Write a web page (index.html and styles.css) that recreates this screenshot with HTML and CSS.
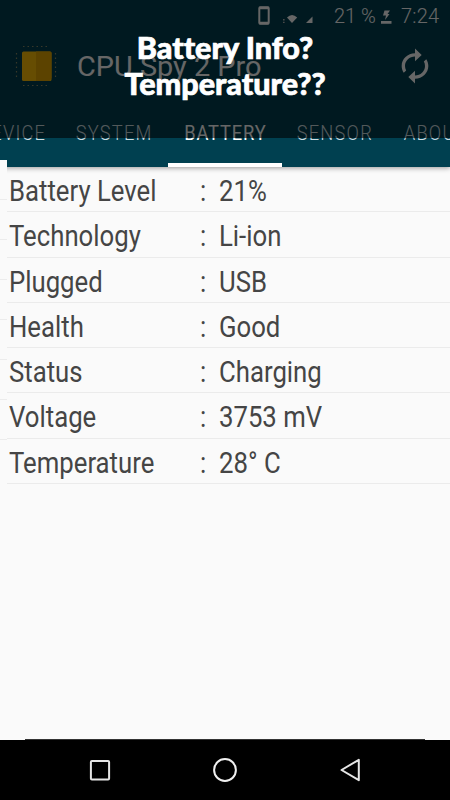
FILE: index.html
```
<!DOCTYPE html>
<html lang="en">
<head>
    <meta charset="UTF-8">
    <meta name="viewport" content="width=device-width, initial-scale=1.0">
    <title>CPU Spy 2 Pro</title>
    <link rel="stylesheet" href="styles.css">
</head>
<body>
    <div class="phone">
        <header class="header">
            <div class="status-bar">
                <svg class="status-icons" width="64" height="32" viewBox="0 0 64 32">
                    <rect x="9.3" y="7.3" width="9.4" height="16.4" rx="1" fill="none" stroke="#fff" stroke-width="2"/>
                    <path d="M9 8h10M9 23h10" stroke="#fff" stroke-width="2.6"/>
                    <path d="M33 19h1.6v1.6H33zM33 21.7h1.6v1.4H33z" fill="#bbb"/>
                    <path d="M37 17.5Q42 12.500 47.2 17.5L42 23z" fill="#fff"/>
                    <path d="M62.500 16.500v6.500h-6.500z" fill="#fff"/>
                </svg>
                <span class="percent">21 %</span>
                <svg class="charge" width="12" height="32" viewBox="0 0 12 32">
                    <path d="M4.5 10.5H10L7.5 14H9.5L5 20l1-4.5H3zM1 21h10.5v2.8H1z" fill="#fff"/>
                </svg>
                <span class="clock">7:24</span>
            </div>
            <div class="toolbar">
                <svg class="chip" width="42" height="42" viewBox="0 0 42 42">
                    <path d="M8 1.5h26M8 40.5h26M1.5 8v26M40.5 8v26" stroke="#8a8a66" stroke-width="1.2" stroke-dasharray="1.5 3"/>
                    <rect x="7" y="6.5" width="29.5" height="29.5" rx="1.5" fill="#ffc107"/>
                    <path d="M21 6.5h14a1.5 1.5 0 0 1 1.5 1.5v25l-2 3H21z" fill="#e5a800"/>
                </svg>
                <h1>CPU Spy 2 Pro</h1>
                <svg class="refresh" width="40" height="38" viewBox="0 0 24 24" preserveAspectRatio="none">
                    <path fill="#fff" d="M12 6v3l4-4-4-4v3c-4.42 0-8 3.58-8 8 0 1.57.46 3.03 1.24 4.26L6.7 14.8c-.45-.83-.7-1.79-.7-2.8 0-3.31 2.69-6 6-6zm6.76 1.74L17.3 9.2c.44.84.7 1.79.7 2.8 0 3.31-2.69 6-6 6v-3l-4 4 4 4v-3c4.42 0 8-3.58 8-8 0-1.57-.46-3.03-1.24-4.26z"/>
                </svg>
            </div>
            <nav class="tabs">
                <div class="tab device"><span>DEVICE</span></div>
                <div class="tab system"><span>SYSTEM</span></div>
                <div class="tab battery active"><span>BATTERY</span></div>
                <div class="tab sensor"><span>SENSOR</span></div>
                <div class="tab about"><span>ABOUT</span></div>
            </nav>
        </header>

        <main class="content">
            <div class="prev-page">
                <i></i><i></i><i></i><i></i><i></i><i></i><i></i>
            </div>
            <ul class="info">
                <li><span class="name">Battery Level</span><span class="colon">:</span><span class="value">21%</span></li>
                <li><span class="name">Technology</span><span class="colon">:</span><span class="value">Li-ion</span></li>
                <li><span class="name">Plugged</span><span class="colon">:</span><span class="value">USB</span></li>
                <li><span class="name">Health</span><span class="colon">:</span><span class="value">Good</span></li>
                <li><span class="name">Status</span><span class="colon">:</span><span class="value">Charging</span></li>
                <li><span class="name">Voltage</span><span class="colon">:</span><span class="value">3753 mV</span></li>
                <li><span class="name">Temperature</span><span class="colon">:</span><span class="value">28° C</span></li>
            </ul>
        </main>

        <footer class="nav-bar">
            <svg width="24" height="26" viewBox="0 0 24 26"><rect x="2.9" y="3.9" width="18.2" height="18.7" rx="1" fill="none" stroke="#e6e6e6" stroke-width="2"/></svg>
            <svg width="24" height="26" viewBox="0 0 24 26"><circle cx="12" cy="13" r="10.9" fill="none" stroke="#f0f0f0" stroke-width="2"/></svg>
            <svg width="24" height="26" viewBox="0 0 24 26"><path d="M20.8 2.8v20.4L3.5 13z" fill="none" stroke="#e6e6e6" stroke-width="2" stroke-linejoin="round"/></svg>
        </footer>

        <div class="caption">
            <p>Battery Info?</p>
            <p>Temperature??</p>
        </div>
    </div>
</body>
</html>
```
FILE: styles.css
```
* {
    box-sizing: border-box;
}
body {
    margin: 0;
    font-family: Roboto, sans-serif;
    background: #fafafa;
}
.phone {
    position: relative;
    display: flex;
    flex-direction: column;
    width: 450px;
    height: 800px;
    overflow: hidden;
}
.header {
    display: flex;
    flex-direction: column;
    height: 167px;
    background: #004050;
    color: #fff;
    box-shadow: 0 1px 5px rgba(0, 0, 0, 0.4);
}
.status-bar {
    display: flex;
    height: 32px;
    padding-left: 250px;
    font-size: 20px;
    line-height: 33px;
    font-weight: 300;
}
.percent {
    width: 46px;
    margin-left: 20px;
    white-space: nowrap;
}
.clock {
    margin-left: 9px;
    letter-spacing: 0.2px;
}
.charge {
    flex: none;
}
.toolbar {
    display: flex;
    align-items: center;
    height: 67px;
    padding: 0 15px;
}
h1 {
    flex: 1;
    margin: 1px 0 0 20px;
    font-size: 27.5px;
    font-weight: 400;
    white-space: nowrap;
    transform: scaleX(1.05);
    transform-origin: left;
}
.tabs {
    display: flex;
    flex: 1;
    font-size: 21px;
    font-weight: 300;
    overflow: hidden;
}
.tab {
    flex: none;
    display: flex;
    justify-content: center;
    padding-top: 22px;
    line-height: 25px;
    color: #d0dee2;
}
.tab span {
    letter-spacing: 1.4px;
    transform: scaleX(0.87);
}
.device {
    width: 61px;
    justify-content: flex-end;
}
.device span {
    margin-right: 10px;
}
.system {
    width: 107px;
}
.battery {
    width: 114px;
}
.battery span {
    letter-spacing: 1px;
    margin-left: 1px;
}
.sensor {
    width: 106px;
}
.about {
    width: 95px;
}
.tab.active {
    color: #fff;
    font-weight: 400;
    border-bottom: 4px solid #fff;
}
.content {
    display: flex;
    flex: 1;
}
.prev-page {
    width: 7px;
    height: 320px;
    margin-top: -7px;
    background: #fafafa;
    z-index: 1;
}
.prev-page i {
    display: block;
    height: 40px;
    border-bottom: 1px solid #ececec;
}
.info {
    flex: 1;
    margin: 0;
    padding: 0;
    list-style: none;
}
.info li {
    display: grid;
    grid-template-columns: 191px 19px 1fr;
    height: 45.25px;
    padding-left: 2px;
    border-bottom: 1px solid #ebebeb;
    font-size: 29.5px;
    line-height: 48px;
    color: #454545;
    white-space: nowrap;
}
.info span {
    transform: scaleX(0.872);
    transform-origin: left;
}
.nav-bar {
    position: relative;
    display: flex;
    justify-content: space-between;
    height: 60px;
    padding: 17px 88px;
    background: #000;
}
.nav-bar::before {
    content: "";
    position: absolute;
    left: 25px;
    right: 25px;
    top: -1px;
    height: 1px;
    background: #333;
}
.caption {
    position: absolute;
    top: 0;
    left: 0;
    width: 450px;
    height: 138px;
    padding-top: 29px;
    background: rgba(0, 0, 0, 0.6);
    color: #fff;
    font-family: Lato, sans-serif;
    font-size: 30.5px;
    font-weight: 900;
    font-variant-ligatures: none;
    -webkit-text-stroke: 0.7px #fff;
    line-height: 36px;
    text-align: center;
}
.caption p {
    margin: 0;
}
```
